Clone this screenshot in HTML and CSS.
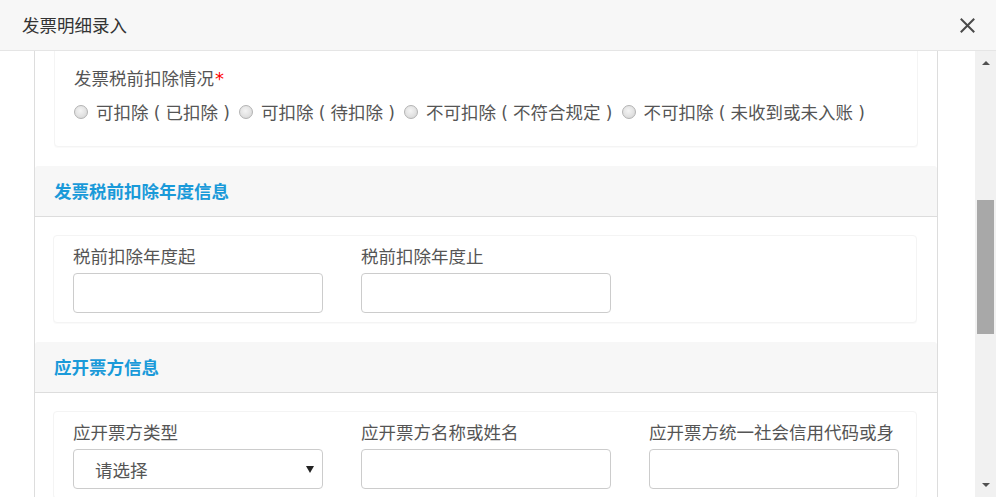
FILE: index.html
```html
<!DOCTYPE html>
<html lang="zh-CN">
<head>
<meta charset="utf-8">
<title>发票明细录入</title>
<link rel="stylesheet" href="styles.css">
</head>
<body>
<div class="dialog">
  <header class="dlg-head">
    <h1 class="dlg-title">发票明细录入</h1>
    <button class="dlg-close" type="button" aria-label="关闭">
      <svg width="15" height="15" viewBox="0 0 15 15"><path d="M1.5 1.5L13.5 13.5M13.5 1.5L1.5 13.5" stroke="#4a4a4a" stroke-width="2" stroke-linecap="square" fill="none"/></svg>
    </button>
  </header>
  <div class="dlg-body">
    <div class="gutter"></div>
    <div class="panel">
      <div class="scroller">
        <section class="card card-first">
          <div class="field-wide">
            <div class="label">发票税前扣除情况<span class="req">*</span></div>
            <div class="radios">
              <label class="radio"><input type="radio" name="kc"><span>可扣除<span class="p">(</span>已扣除<span class="p">)</span></span></label>
              <label class="radio"><input type="radio" name="kc"><span>可扣除<span class="p">(</span>待扣除<span class="p">)</span></span></label>
              <label class="radio"><input type="radio" name="kc"><span>不可扣除<span class="p">(</span>不符合规定<span class="p">)</span></span></label>
              <label class="radio"><input type="radio" name="kc"><span>不可扣除<span class="p">(</span>未收到或未入账<span class="p">)</span></span></label>
            </div>
          </div>
        </section>

        <h2 class="sec-head">发票税前扣除年度信息</h2>
        <section class="card grid">
          <div class="field">
            <div class="label">税前扣除年度起</div>
            <input class="input" type="text">
          </div>
          <div class="field">
            <div class="label">税前扣除年度止</div>
            <input class="input" type="text">
          </div>
        </section>

        <h2 class="sec-head">应开票方信息</h2>
        <section class="card grid">
          <div class="field">
            <div class="label">应开票方类型</div>
            <div class="select-wrap">
              <select class="input select"><option>请选择</option></select>
            </div>
          </div>
          <div class="field">
            <div class="label">应开票方名称或姓名</div>
            <input class="input" type="text">
          </div>
          <div class="field">
            <div class="label">应开票方统一社会信用代码或身</div>
            <input class="input" type="text">
          </div>
        </section>
      </div>
    </div>
    <div class="spacer"></div>
    <div class="scrollbar">
      <div class="sb-btn"><span class="tri-up"></span></div>
      <div class="sb-track"><div class="sb-thumb"></div></div>
      <div class="sb-btn"><span class="tri-down"></span></div>
    </div>
  </div>
</div>
</body>
</html>
```
FILE: styles.css
```css
* { box-sizing: border-box; }
html, body { margin: 0; padding: 0; }
body {
  width: 996px;
  height: 497px;
  overflow: hidden;
  background: #fff;
  font-family: "Noto Sans CJK SC", "Noto Sans", sans-serif;
  color: #555;
}
.dialog { display: flex; flex-direction: column; height: 497px; }

.dlg-head {
  height: 51px;
  flex: none;
  background: #f7f7f7;
  border-bottom: 1px solid #e5e5e5;
  display: flex;
  align-items: center;
  justify-content: space-between;
  padding: 0 21px 0 22px;
}
.dlg-title {
  margin: 0;
  font-size: 17.5px;
  font-weight: normal;
  color: #333;
  line-height: 24px;
}
.dlg-close {
  border: 0;
  background: none;
  padding: 0;
  width: 15px;
  height: 15px;
  display: flex;
}

.dlg-body { flex: 1; display: flex; min-height: 0; }
.gutter { width: 34px; flex: none; }
.panel {
  width: 904px;
  flex: none;
  border-left: 1px solid #ddd;
  border-right: 1px solid #ddd;
  padding: 0 19px;
  overflow: hidden;
}
.scroller { margin-top: -30px; }
.spacer { width: 37px; flex: none; }

.card {
  width: 864px;
  background: #fff;
  border: 1px solid #f4f4f4;
  border-radius: 4px;
  box-shadow: 0 1px 1px rgba(0,0,0,0.025);
}
.card-first { padding: 44px 19px 22px; }
.grid {
  display: grid;
  grid-template-columns: repeat(3, 288px);
  padding: 8px 0 9px;
  margin-left: -1px;
}
.field { padding: 0 19px; }
.label {
  font-size: 17.5px;
  line-height: 24px;
  height: 24px;
  color: #555;
  margin-bottom: 5px;
  white-space: nowrap;
}
.req {
  color: #f00;
  font-size: 18px;
  line-height: 0;
  font-family: "DejaVu Sans", sans-serif;
  margin-left: 1px;
}

.radios { display: flex; align-items: center; margin-top: 10px; height: 24px; }
.card-first .label { margin-bottom: 0; }
.radio {
  display: inline-flex;
  align-items: center;
  margin-right: 4px;
  font-size: 17.5px;
  line-height: 24px;
  color: #555;
  white-space: nowrap;
}
.p {
  display: inline-block;
  width: 1em;
  text-align: center;
  font-family: "DejaVu Sans", sans-serif;
  font-size: 17px;
  color: #555;
}
.radio input {
  appearance: none;
  -webkit-appearance: none;
  width: 14px;
  height: 14px;
  margin: 0 8px 0 0;
  border: 1px solid #b3b3b3;
  border-radius: 50%;
  background: radial-gradient(circle at 45% 40%, #f4f4f4 0%, #e2e2e2 55%, #cfcfcf 100%);
}

.sec-head {
  margin: 19px -19px 18px;
  height: 51px;
  background: #f7f7f7;
  border-bottom: 1px solid #ddd;
  border-radius: 3px 3px 0 0;
  padding: 0 19px 2px;
  display: flex;
  align-items: center;
  font-size: 17.5px;
  font-weight: bold;
  color: #1a9ad9;
}

.input {
  display: block;
  width: 250px;
  height: 40px;
  border: 1px solid #ccc;
  border-radius: 4px;
  background: #fff;
  font-family: inherit;
  font-size: 17.5px;
  color: #555;
  padding: 0 20px;
  outline: none;
}
.select-wrap { position: relative; width: 250px; }
.select {
  appearance: none;
  -webkit-appearance: none;
  padding-left: 21px;
}
.select-wrap::after {
  content: "";
  position: absolute;
  right: 9px;
  top: 17px;
  border-left: 4px solid transparent;
  border-right: 4px solid transparent;
  border-top: 7px solid #222;
}

.scrollbar {
  width: 21px;
  flex: none;
  background: #f1f1f1;
  display: flex;
  flex-direction: column;
}
.sb-btn { height: 24px; display: flex; align-items: center; justify-content: center; flex: none; }
.tri-up {
  border-left: 4px solid transparent;
  border-right: 4px solid transparent;
  border-bottom: 4px solid #505050;
}
.tri-down {
  border-left: 4px solid transparent;
  border-right: 4px solid transparent;
  border-top: 4px solid #505050;
}
.sb-track { flex: 1; padding: 0 2px; }
.sb-thumb { margin-top: 125px; height: 134px; background: #a8a8a8; }
```
